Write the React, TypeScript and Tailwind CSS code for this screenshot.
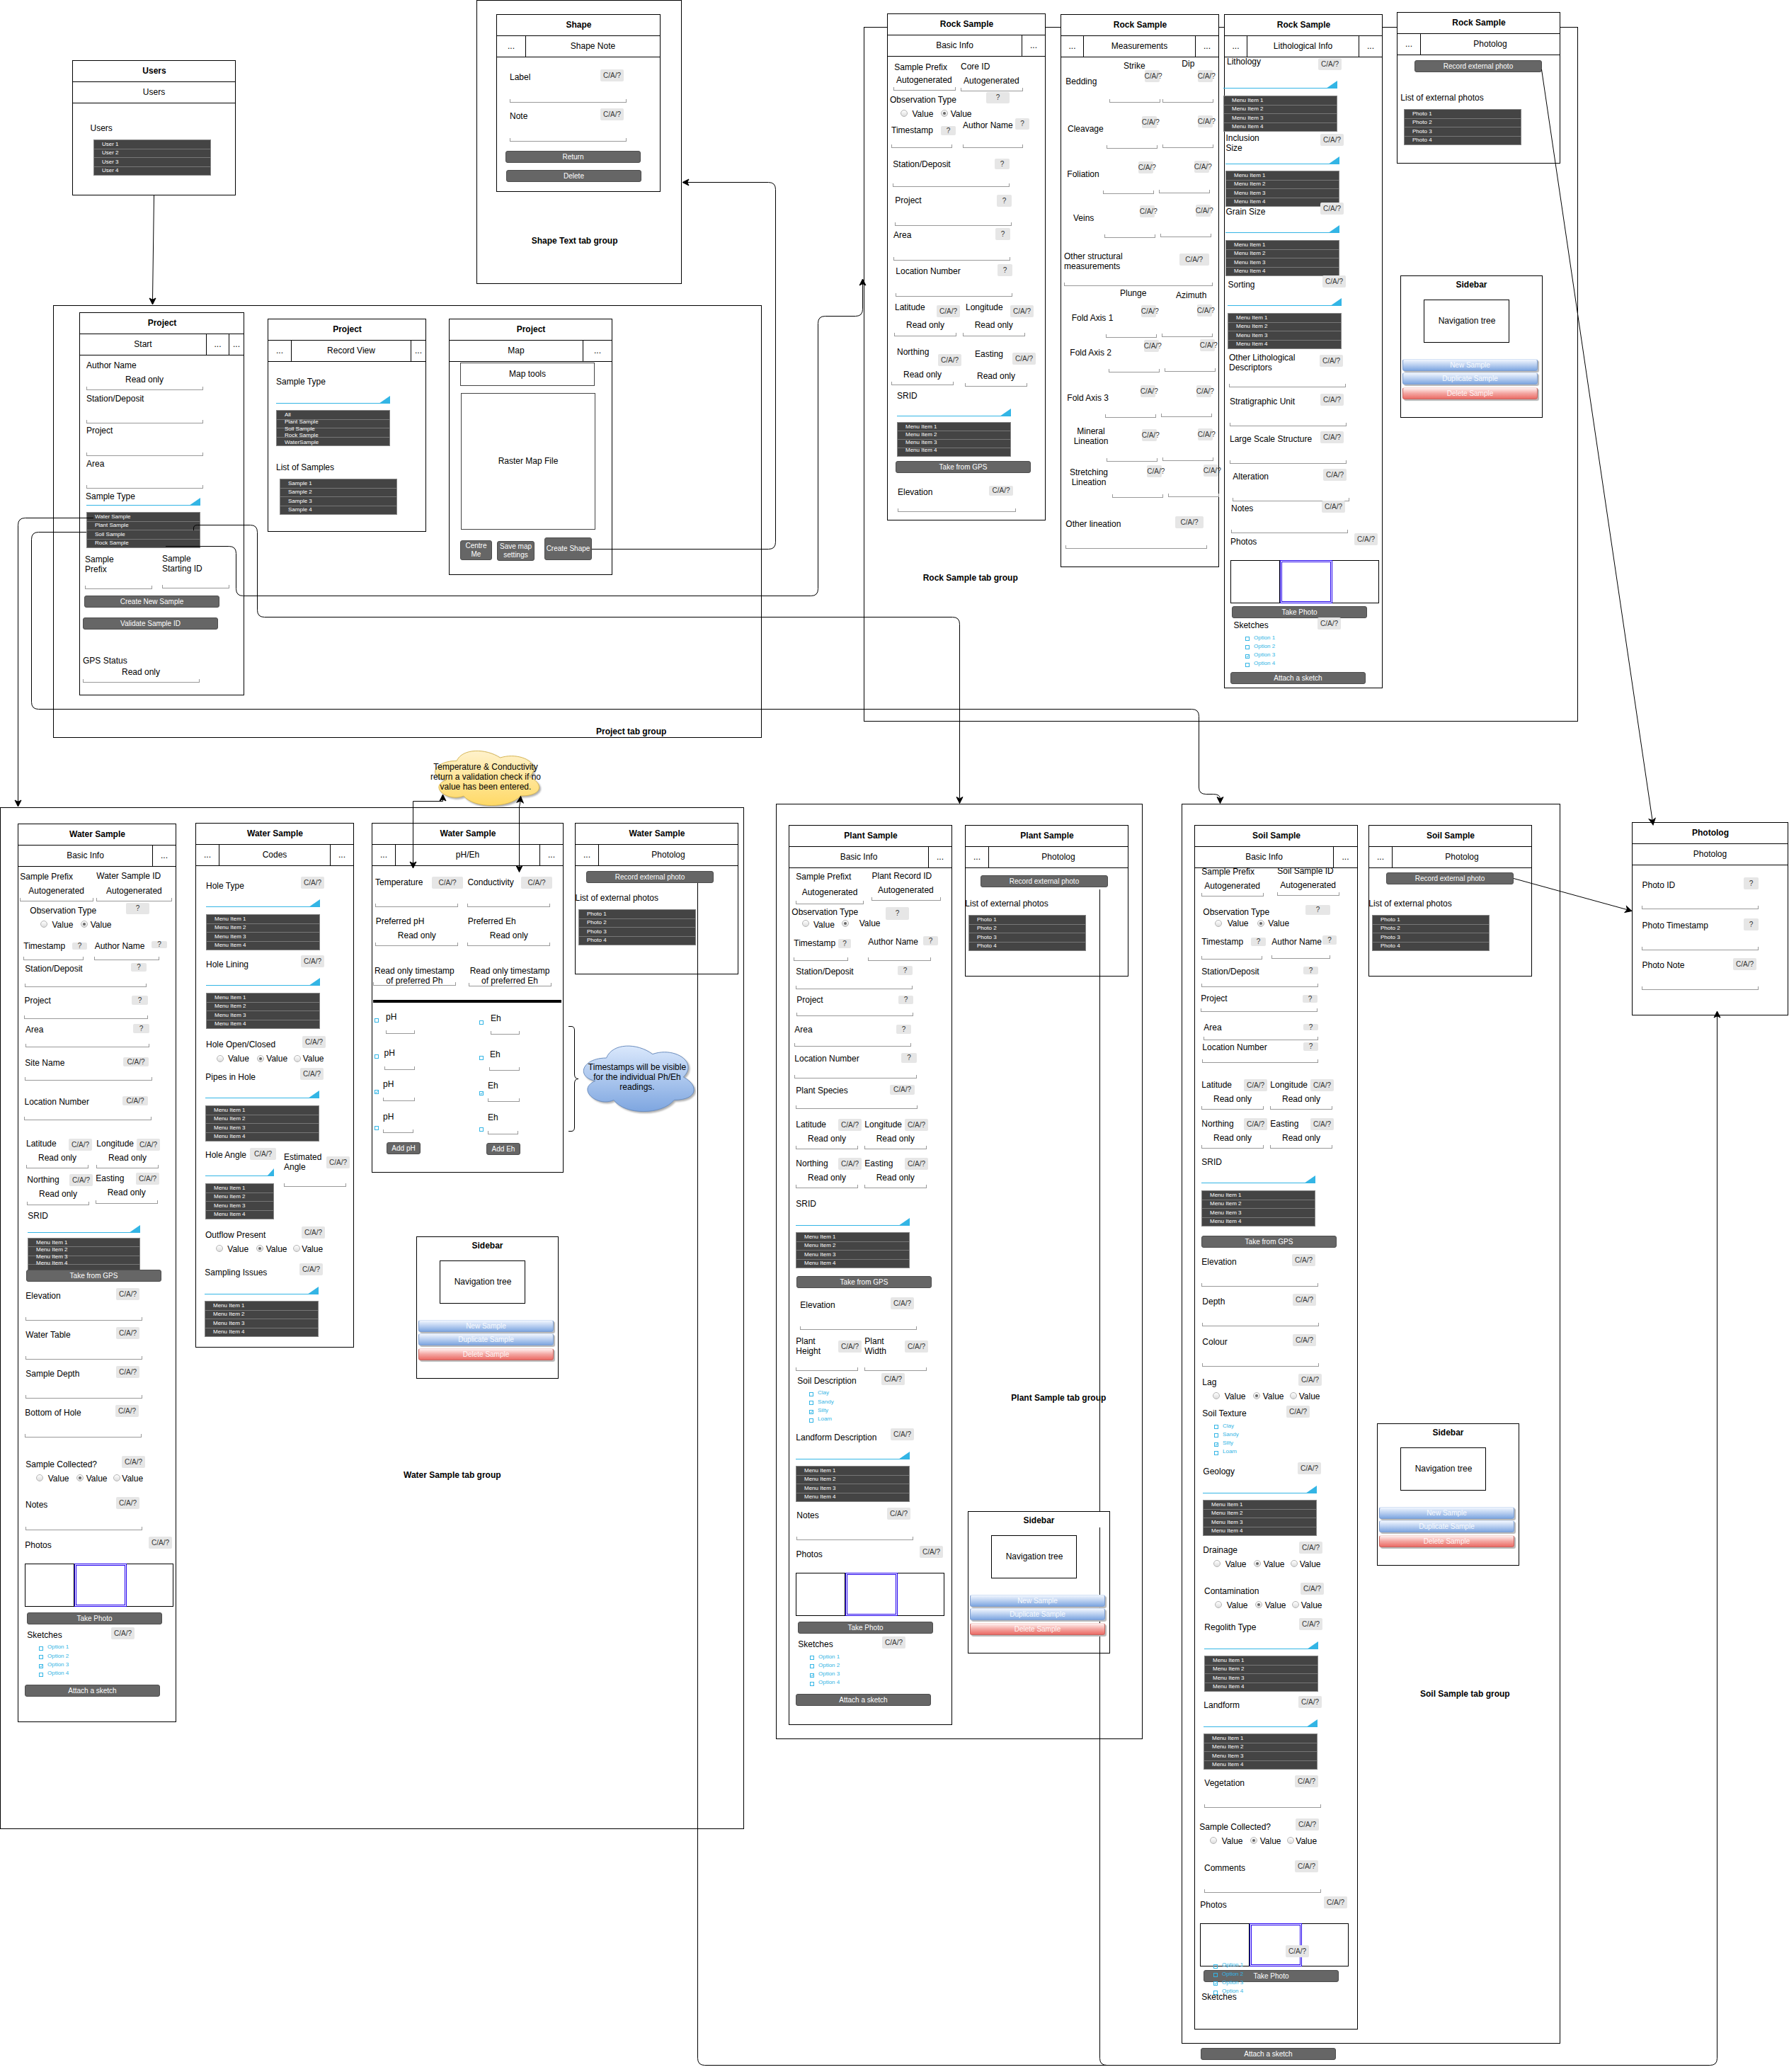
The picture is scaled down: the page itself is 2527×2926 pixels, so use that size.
import React from "react";

type Label = [x: number, y: number, text: string];
type Badge = [x: number, y: number, w?: number, h?: number, text?: string];
type Field = [x: number, bottom: number, w: number];
type Drop = [x: number, bottom: number, w?: number];
type Menu = [x: number, y: number, w: number, items: string[], h?: number, pitch?: number];
type Button = [x: number, y: number, text: string, w?: number, h?: number];
type Radio = [x: number, y: number, on?: boolean];
type Option = [x: number, y: number, text: string, on?: boolean];
type Point = [x: number, y: number];

interface Screen {
  box: [x: number, y: number, w: number, h: number];
  title: string;
  tabs: [text: string, w?: number][];
  labels?: Label[];
  centered?: Label[];
  fields?: Field[];
  drops?: Drop[];
  menus?: Menu[];
  strips?: Point[];
  buttons?: Button[];
  badges?: Badge[];
  radios?: Radio[];
  options?: Option[];
}

const MENU = ["Menu Item 1", "Menu Item 2", "Menu Item 3", "Menu Item 4"];
const PHOTOS = ["Photo 1", "Photo 2", "Photo 3", "Photo 4"];
const AUTO = "Autogenerated";
const READ = "Read only";

const optionList = (x: number, y: number, names: string[]): Option[] =>
  names.map((name, i) => [x, y + i * 12.3, name, i === 2]);

const OPTIONS = ["Option 1", "Option 2", "Option 3", "Option 4"];
const TEXTURES = ["Clay", "Sandy", "Silty", "Loam"];

const users: Screen = {
  box: [102, 85, 231, 191],
  title: "Users",
  tabs: [["Users"]],
  labels: [[127.5, 181, "Users"]],
  menus: [[132, 197, 166, ["User 1", "User 2", "User 3", "User 4"]]],
};

const shape: Screen = {
  box: [701, 20, 232, 251],
  title: "Shape",
  tabs: [["...", 41], ["Shape Note"]],
  labels: [[720, 109, "Label"], [720, 164, "Note"]],
  fields: [[720, 145, 165], [720, 200, 165]],
  badges: [[848, 98], [848, 153]],
  buttons: [[714, 213, "Return"], [715, 240, "Delete"]],
};

const projectStart: Screen = {
  box: [112, 441, 233, 541],
  title: "Project",
  tabs: [["Start", 179], ["...", 32], ["..."]],
  labels: [
    [122, 515.6, "Author Name"], [177, 535.7, READ], [122, 562.6, "Station/Deposit"], [122, 608.4, "Project"],
    [122, 655, "Area"], [121, 701, "Sample Type"], [120, 790, "Sample"], [120, 804, "Prefix"],
    [229, 788.5, "Sample"], [229, 802.5, "Starting ID"], [117, 932.7, "GPS Status"], [172, 948.7, READ],
  ],
  fields: [[122, 551, 165], [122, 598, 165], [122, 644, 165], [122, 690, 165], [120, 832, 95], [229, 831, 95], [117, 964, 165]],
  drops: [[122, 714, 161]],
  menus: [[122, 723, 161, ["Water Sample", "Plant Sample", "Soil Sample", "Rock Sample"]]],
  buttons: [[119, 841, "Create New Sample"], [117, 872, "Validate Sample ID"]],
};

const projectRecords: Screen = {
  box: [378, 450, 224, 301],
  title: "Project",
  tabs: [["...", 33], ["Record View", 169], ["..."]],
  labels: [[390, 539.3, "Sample Type"], [390, 660, "List of Samples"]],
  drops: [[390, 570, 161]],
  menus: [
    [390, 579, 161, ["All", "Plant Sample", "Soil Sample", "Rock Sample", "WaterSample"], 51, 9.8],
    [395, 676, 166, ["Sample 1", "Sample 2", "Sample 3", "Sample 4"]],
  ],
};

const projectMap: Screen = {
  box: [634, 450, 231, 362],
  title: "Project",
  tabs: [["Map", 189], ["..."]],
  buttons: [
    [650, 763, "Centre\nMe", 45, 28],
    [702, 764, "Save map\nsettings", 53, 28],
    [769, 759, "Create Shape", 67, 32],
  ],
};

const rockBasic: Screen = {
  box: [1253, 19, 224, 716],
  title: "Rock Sample",
  tabs: [["Basic Info", 190], ["..."]],
  labels: [
    [1263.3, 95, "Sample Prefix"], [1357, 94, "Core ID"], [1266, 113, AUTO], [1361, 114, AUTO],
    [1257, 141, "Observation Type"], [1288.5, 160.7, "Value"], [1342.7, 160.7, "Value"],
    [1259, 183.5, "Timestamp"], [1360, 177, "Author Name"], [1261.3, 232, "Station/Deposit"],
    [1264.3, 283.4, "Project"], [1262, 332, "Area"], [1265.3, 383, "Location Number"],
    [1264, 434, "Latitude"], [1364, 434, "Longitude"], [1280, 459, READ], [1376.7, 459, READ],
    [1267, 497, "Northing"], [1377, 500, "Easting"], [1276, 529, READ], [1380, 531.4, READ],
    [1267, 559.3, "SRID"], [1268, 695, "Elevation"],
  ],
  fields: [
    [1262, 128, 88], [1357, 129, 88], [1259, 209, 86], [1360, 209, 85], [1261, 264, 165], [1264, 319, 165],
    [1262, 368, 165], [1265, 419, 165], [1263, 475, 88], [1360, 475, 88], [1259, 544, 88], [1363, 546, 88], [1268, 723, 167],
  ],
  drops: [[1267, 588]],
  menus: [[1267, 596, 161, MENU, 49, 11.1]],
  buttons: [[1265, 651, "Take from GPS"]],
  badges: [
    [1393, 130, 33, 16, "?"], [1329, 177.5, 21, 13, "?"], [1434, 167, 20, 16, "?"], [1405, 223.5, 21, 15, "?"],
    [1408, 275, 21, 17, "?"], [1406, 322, 21, 17, "?"], [1409, 373, 21, 17, "?"], [1323, 431], [1427, 431],
    [1325, 500], [1430, 498], [1397, 686, 34, 14],
  ],
  radios: [[1277, 160], [1334, 160, true]],
};

const rockMeasurements: Screen = {
  box: [1498, 20, 224, 781],
  title: "Rock Sample",
  tabs: [["...", 32], ["Measurements", 158], ["..."]],
  labels: [
    [1587, 93, "Strike"], [1669.3, 90, "Dip"], [1505.3, 115, "Bedding"], [1508, 182, "Cleavage"],
    [1507.3, 246, "Foliation"], [1516, 308, "Veins"], [1503, 361.6, "Other structural"], [1503, 376, "measurements"],
    [1582, 414, "Plunge"], [1661, 417, "Azimuth"], [1513.7, 449, "Fold Axis 1"], [1511.3, 498, "Fold Axis 2"],
    [1507.3, 562, "Fold Axis 3"], [1505.3, 740, "Other lineation"],
  ],
  centered: [[1541, 609, "Mineral\nLineation"], [1538, 667, "Stretching\nLineation"]],
  fields: [
    [1567, 145, 72], [1642, 145, 72], [1563, 210, 72], [1642, 209, 72], [1558, 274, 72], [1637, 273, 72],
    [1560, 336, 72], [1639, 335, 72], [1503, 404, 210], [1562, 477, 72], [1641, 476, 72], [1566, 526, 72],
    [1645, 525, 72], [1561, 590, 72], [1640, 589, 72], [1563, 652, 72], [1642, 651, 72], [1571, 703, 72],
    [1650, 702, 72], [1505, 775, 200],
  ],
  badges: [
    [1616.5, 98.5, 21], [1691.7, 98.5, 21], [1612.7, 163.5, 21], [1691.7, 163, 21], [1607.7, 227.5, 21], [1686.7, 226.5, 21],
    [1609.7, 289.5, 21], [1688.7, 289, 21], [1665.7, 358, 42], [1611.7, 431, 21], [1690.7, 430, 21],
    [1615.7, 480, 21], [1694.7, 479, 21], [1610.7, 544, 21], [1689.7, 543.5, 21], [1612.7, 606, 21],
    [1691.7, 605, 21], [1620.3, 657, 21], [1699.7, 656, 21], [1660, 729, 40],
  ],
};

const rockLithology: Screen = {
  box: [1729, 20, 224, 952],
  title: "Rock Sample",
  tabs: [["...", 32], ["Lithological Info", 158], ["..."]],
  labels: [
    [1733, 87, "Lithology"], [1731.4, 194.8, "Inclusion"], [1731.4, 209, "Size"], [1731.4, 298.5, "Grain Size"],
    [1734.5, 402, "Sorting"], [1736, 505, "Other Lithological"], [1736, 519, "Descriptors"],
    [1737, 566.5, "Stratigraphic Unit"], [1737, 620, "Large Scale Structure"], [1741.3, 673, "Alteration"],
    [1739, 718, "Notes"], [1738, 765, "Photos"], [1742.4, 883, "Sketches"],
  ],
  fields: [[1736, 547, 165], [1737, 602, 165], [1737, 655, 165], [1741, 708, 165], [1739, 753, 165]],
  drops: [[1728, 125], [1731, 232], [1731, 329], [1734, 432]],
  menus: [[1728, 135, 161, MENU], [1731, 241, 161, MENU], [1731, 339, 161, MENU], [1734, 442, 161, MENU]],
  strips: [[1738, 791]],
  buttons: [[1740, 856, "Take Photo"], [1738, 949, "Attach a sketch"]],
  badges: [
    [1862, 82], [1865, 189], [1865, 286], [1868, 389], [1864, 501], [1865, 556], [1865, 609], [1869, 662],
    [1867, 707], [1913, 753], [1861, 872],
  ],
  options: optionList(1759, 900.5, OPTIONS),
};

const rockPhotolog: Screen = {
  box: [1973, 17, 231, 214],
  title: "Rock Sample",
  tabs: [["...", 33], ["Photolog"]],
  labels: [[1978.3, 138, "List of external photos"]],
  menus: [[1983, 154, 166, PHOTOS]],
  buttons: [[1998, 85, "Record external photo", 180]],
};

const waterBasic: Screen = {
  box: [25, 1163, 224, 1269],
  title: "Water Sample",
  tabs: [["Basic Info", 190], ["..."]],
  labels: [
    [28.3, 1237.5, "Sample Prefix"], [136.3, 1237, "Water Sample ID"], [40.3, 1258, AUTO], [150, 1258, AUTO],
    [42.3, 1286, "Observation Type"], [73.5, 1306, "Value"], [127.7, 1306, "Value"], [33.3, 1335.5, "Timestamp"],
    [133.7, 1335.5, "Author Name"], [35.3, 1367.6, "Station/Deposit"], [34.5, 1412.7, "Project"], [36, 1453.5, "Area"],
    [35.3, 1500.5, "Site Name"], [34.5, 1555.5, "Location Number"], [37, 1615.3, "Latitude"], [136.3, 1615.3, "Longitude"],
    [54, 1635.3, READ], [153, 1635.3, READ], [38.3, 1666, "Northing"], [135.3, 1664.3, "Easting"], [55, 1686, READ],
    [151.7, 1684, READ], [39.3, 1716.8, "SRID"], [36.3, 1830, "Elevation"], [36.3, 1885, "Water Table"],
    [36.3, 1940, "Sample Depth"], [35.3, 1995, "Bottom of Hole"], [36.3, 2068, "Sample Collected?"],
    [67.7, 2088, "Value"], [121.7, 2088, "Value"], [172.3, 2088, "Value"], [36, 2125, "Notes"], [35.3, 2182, "Photos"],
    [38.3, 2309, "Sketches"],
  ],
  fields: [
    [28, 1273, 104], [136, 1273, 107], [33, 1356, 85], [133, 1356, 92], [35, 1394, 172], [34, 1439, 175], [36, 1479, 175],
    [35, 1526, 180], [34, 1582, 180], [37, 1650, 88], [136, 1650, 88], [38, 1702, 88], [135, 1700, 88], [36, 1865, 165],
    [36, 1920, 165], [36, 1975, 165], [35, 2030, 165], [36, 2161, 165],
  ],
  drops: [[39, 1741, 159]],
  menus: [[39, 1748, 159, MENU, 50, 9.8]],
  strips: [[35, 2208]],
  buttons: [[37, 1793, "Take from GPS"], [38, 2277, "Take Photo"], [35, 2379, "Attach a sketch"]],
  badges: [
    [178, 1274.5, 33, 16, "?"], [102, 1331, 21, 10, "?"], [214, 1329, 22, 10, "?"], [185, 1360, 22, 12, "?"],
    [186, 1406, 23, 13, "?"], [188, 1446, 23, 13, "?"], [174, 1492.5, 36, 13], [173, 1547.5, 36, 13], [97, 1607.5],
    [193, 1607.5], [98, 1658], [192, 1656], [164, 1819], [164, 1874], [164, 1929], [163, 1984], [172, 2056],
    [164, 2114], [210, 2170], [157, 2298],
  ],
  radios: [[62, 1305], [119, 1305, true], [56, 2087], [113, 2087, true], [165, 2087]],
  options: optionList(55, 2326.4, OPTIONS),
};

const waterCodes: Screen = {
  box: [276, 1162, 224, 741],
  title: "Water Sample",
  tabs: [["...", 33], ["Codes", 157], ["..."]],
  labels: [
    [291, 1251, "Hole Type"], [291, 1362, "Hole Lining"], [291, 1475.2, "Hole Open/Closed"], [322, 1495, "Value"],
    [376.3, 1495, "Value"], [427.7, 1495, "Value"], [290.3, 1521.3, "Pipes in Hole"], [290, 1631, "Hole Angle"],
    [401, 1634, "Estimated"], [401, 1648.3, "Angle"], [290, 1744, "Outflow Present"], [321.3, 1763.7, "Value"],
    [375.7, 1763.7, "Value"], [426.3, 1763.7, "Value"], [289.3, 1797, "Sampling Issues"],
  ],
  fields: [[401, 1676, 88]],
  drops: [[291, 1281], [291, 1392], [290, 1551], [290, 1661, 97], [289, 1828]],
  menus: [
    [291, 1291, 161, MENU], [291, 1402, 161, MENU], [290, 1561, 161, MENU], [290, 1671, 97, MENU], [289, 1837, 161, MENU],
  ],
  badges: [[425, 1238], [425, 1349], [427, 1463], [424, 1508], [353, 1621, 37], [461, 1633], [426, 1732], [423, 1784]],
  radios: [[311, 1494.7], [368, 1494.7, true], [420, 1494.7], [310, 1763], [367, 1763, true], [419, 1763]],
};

const waterPh: Screen = {
  box: [525, 1162, 271, 494],
  title: "Water Sample",
  tabs: [["...", 33], ["pH/Eh", 204], ["..."]],
  labels: [
    [530, 1246, "Temperature"], [660.4, 1246, "Conductivity"], [530.7, 1301, "Preferred pH"], [660.7, 1301, "Preferred Eh"],
    [561.8, 1321, READ], [691.8, 1321, READ], [545, 1436, "pH"], [542.5, 1487, "pH"], [541, 1531, "pH"],
    [541, 1576.5, "pH"], [693, 1437.5, "Eh"], [692, 1488.5, "Eh"], [689, 1532.5, "Eh"], [689, 1578, "Eh"],
  ],
  centered: [[585.4, 1370.5, "Read only timestamp\nof preferred Ph"], [720, 1371, "Read only timestamp\nof preferred Eh"]],
  fields: [
    [530, 1281, 117], [660, 1281, 117], [530, 1336, 117], [660, 1336, 117], [527, 1392, 117], [662, 1393, 117],
    [545, 1460, 41], [543, 1511, 43], [541, 1555, 45], [541, 1600, 43], [693, 1461, 41], [691, 1512, 43],
    [689, 1556, 45], [689, 1602, 43],
  ],
  buttons: [[546, 1613, "Add pH", 48], [687, 1614, "Add Eh", 48]],
  badges: [[610, 1238, 44], [736, 1238, 44]],
  options: [
    [529, 1440, ""], [529, 1490.5, ""], [529, 1541, "", true], [529, 1591.5, ""],
    [677, 1442.5, ""], [677, 1493, ""], [677, 1543, "", true], [677, 1593.5, ""],
  ],
};

const waterPhotolog: Screen = {
  box: [812, 1162, 231, 214],
  title: "Water Sample",
  tabs: [["...", 33], ["Photolog"]],
  labels: [[812.5, 1268, "List of external photos"]],
  menus: [[817, 1284, 166, PHOTOS]],
  buttons: [[828, 1230, "Record external photo", 180]],
};

const plantBasic: Screen = {
  box: [1114, 1165, 231, 1271],
  title: "Plant Sample",
  tabs: [["Basic Info", 197], ["..."]],
  labels: [
    [1124.3, 1237.5, "Sample Prefixt"], [1231.5, 1237, "Plant Record ID"], [1132.7, 1260, AUTO], [1240, 1257, AUTO],
    [1118.3, 1287.5, "Observation Type"], [1149, 1305.5, "Value"], [1213.7, 1303.5, "Value"], [1121.3, 1331.7, "Timestamp"],
    [1226.3, 1330.4, "Author Name"], [1124.3, 1371.6, "Station/Deposit"], [1125.3, 1412.3, "Project"], [1122.3, 1454, "Area"],
    [1122.3, 1494.7, "Location Number"], [1124.3, 1540, "Plant Species"], [1124.3, 1588.4, "Latitude"],
    [1221.3, 1588.4, "Longitude"], [1141, 1608.3, READ], [1237.7, 1608.3, READ], [1124.3, 1643, "Northing"],
    [1221.3, 1643, "Easting"], [1141, 1663, READ], [1237.7, 1663, READ], [1124.3, 1700, "SRID"], [1130.3, 1843, "Elevation"],
    [1124.3, 1893.7, "Plant"], [1124.3, 1908, "Height"], [1221.3, 1893.7, "Plant"], [1221.3, 1908, "Width"],
    [1126.3, 1949.7, "Soil Description"], [1124.3, 2030, "Landform Description"], [1125.3, 2139.5, "Notes"],
    [1124.5, 2195, "Photos"], [1127.3, 2322, "Sketches"],
  ],
  fields: [
    [1124, 1277, 96], [1231, 1272, 98], [1121, 1357, 77], [1226, 1357, 89], [1124, 1397, 165], [1125, 1435, 165],
    [1122, 1478, 165], [1122, 1523, 173], [1124, 1566, 172], [1124, 1623, 88], [1221, 1623, 88], [1124, 1678, 88],
    [1221, 1678, 88], [1130, 1878, 165], [1124, 1936, 88], [1221, 1936, 88], [1125, 2175, 165],
  ],
  drops: [[1124, 1731], [1124, 2061]],
  menus: [[1124, 1740, 161, MENU], [1124, 2070, 161, MENU]],
  strips: [[1124, 2221]],
  buttons: [[1125, 1802, "Take from GPS"], [1127, 2290, "Take Photo"], [1124, 2392, "Attach a sketch"]],
  badges: [
    [1251, 1280.5, 33, 18, "?"], [1184, 1325.5, 18, 13, "?"], [1304, 1322, 21, 13, "?"], [1268, 1364, 21, 13, "?"],
    [1269, 1406, 21, 12, "?"], [1266, 1446.5, 21, 13, "?"], [1273, 1486.5, 22, 14, "?"], [1257, 1531.5, 35, 14],
    [1184, 1580], [1278, 1580], [1184, 1635], [1278, 1635], [1258, 1832], [1184, 1893], [1278, 1893], [1245, 1939],
    [1258, 2017], [1253, 2129], [1299, 2183], [1246, 2311],
  ],
  radios: [[1138, 1303.5], [1194, 1303.5, true]],
  options: [...optionList(1143, 1967.4, TEXTURES), ...optionList(1144, 2339.5, OPTIONS)],
};

const plantPhotolog: Screen = {
  box: [1363, 1165, 231, 214],
  title: "Plant Sample",
  tabs: [["...", 33], ["Photolog"]],
  labels: [[1363.3, 1276, "List of external photos"]],
  menus: [[1368, 1292, 166, PHOTOS]],
  buttons: [[1385, 1236, "Record external photo", 180]],
};

const soilBasic: Screen = {
  box: [1687, 1165, 231, 1701],
  title: "Soil Sample",
  tabs: [["Basic Info", 196], ["..."]],
  labels: [
    [1697.3, 1231, "Sample Prefix"], [1804.3, 1230, "Soil Sample ID"], [1701.3, 1251, AUTO], [1808.3, 1250, AUTO],
    [1699.3, 1288, "Observation Type"], [1733.7, 1304.3, "Value"], [1791.3, 1304.3, "Value"], [1697.3, 1329.5, "Timestamp"],
    [1796.3, 1329.5, "Author Name"], [1697.3, 1371.6, "Station/Deposit"], [1696.3, 1410, "Project"], [1700.3, 1450.7, "Area"],
    [1698.3, 1479, "Location Number"], [1697.3, 1532, "Latitude"], [1794.3, 1532, "Longitude"], [1714, 1552, READ],
    [1811, 1552, READ], [1697.3, 1587, "Northing"], [1794.3, 1587, "Easting"], [1714, 1607, READ], [1811, 1607, READ],
    [1697.3, 1641, "SRID"], [1697.3, 1782, "Elevation"], [1698.3, 1838, "Depth"], [1698.3, 1895, "Colour"],
    [1698.3, 1952.3, "Lag"], [1729.7, 1972, "Value"], [1783.7, 1972, "Value"], [1834.7, 1972, "Value"],
    [1698.3, 1996, "Soil Texture"], [1699.3, 2078, "Geology"], [1699.3, 2189, "Drainage"], [1730.7, 2209, "Value"],
    [1784.7, 2209, "Value"], [1835.7, 2209, "Value"], [1701, 2247, "Contamination"], [1732.7, 2267, "Value"],
    [1786.7, 2267, "Value"], [1837.7, 2267, "Value"], [1701.3, 2298, "Regolith Type"], [1700.3, 2408, "Landform"],
    [1701.3, 2518, "Vegetation"], [1694.3, 2580, "Sample Collected?"], [1725.7, 2600, "Value"], [1779.7, 2600, "Value"],
    [1830.3, 2600, "Value"], [1701, 2638, "Comments"], [1695.3, 2690, "Photos"], [1697.3, 2820, "Sketches"],
  ],
  fields: [
    [1697, 1266, 88], [1804, 1265, 88], [1697, 1355, 86], [1796, 1354, 83], [1697, 1394, 165], [1696, 1429, 165],
    [1700, 1469, 162], [1698, 1501, 164], [1697, 1567, 88], [1794, 1567, 88], [1697, 1622, 88], [1794, 1622, 88],
    [1697, 1817, 165], [1698, 1873, 165], [1698, 1930, 165], [1701, 2553, 165], [1701, 2673, 165],
  ],
  drops: [[1697, 1671], [1699, 2109], [1701, 2329], [1700, 2439]],
  menus: [[1697, 1681, 161, MENU], [1699, 2118, 161, MENU], [1701, 2338, 161, MENU], [1700, 2448, 161, MENU]],
  strips: [[1695, 2716]],
  buttons: [[1697, 1745, "Take from GPS"], [1700, 2782, "Take Photo"], [1696, 2892, "Attach a sketch"]],
  badges: [
    [1844, 1278, 35, 14, "?"], [1767, 1324, 21, 12, "?"], [1868, 1321, 20, 13, "?"], [1841, 1365, 21, 11, "?"],
    [1840, 1404.5, 21, 11, "?"], [1841, 1445.5, 21, 9, "?"], [1841, 1472, 21, 12, "?"], [1757, 1524], [1851, 1524],
    [1757, 1579], [1851, 1579], [1825, 1771], [1826, 1827], [1826, 1884], [1834, 1940], [1817, 1985], [1833, 2065],
    [1835, 2177], [1837, 2235], [1835, 2285], [1834, 2395], [1829, 2507], [1830, 2568], [1829, 2627], [1870, 2678],
    [1816, 2747],
  ],
  radios: [
    [1720.5, 1303.5], [1781, 1303.5, true], [1718, 1971.3], [1775, 1971.3, true], [1827, 1971.3],
    [1719, 2208], [1776, 2208, true], [1828, 2208], [1721, 2266], [1778, 2266, true], [1830, 2266],
    [1714, 2599.4], [1771, 2599.4, true], [1823, 2599.4],
  ],
  options: [...optionList(1715, 2013.5, TEXTURES), ...optionList(1714, 2775.3, OPTIONS)],
};

const soilPhotolog: Screen = {
  box: [1933, 1165, 231, 214],
  title: "Soil Sample",
  tabs: [["...", 33], ["Photolog"]],
  labels: [[1933.3, 1276, "List of external photos"]],
  menus: [[1938, 1292, 166, PHOTOS]],
  buttons: [[1958, 1232, "Record external photo", 180]],
};

const photolog: Screen = {
  box: [2305, 1161, 221, 273],
  title: "Photolog",
  tabs: [["Photolog"]],
  labels: [[2319.5, 1249.5, "Photo ID"], [2319.5, 1307, "Photo Timestamp"], [2319.5, 1363, "Photo Note"]],
  fields: [[2319, 1284, 165], [2319, 1342, 165], [2319, 1398, 165]],
  badges: [[2463, 1239, 21, 17, "?"], [2463, 1297, 21, 17, "?"], [2448, 1353]],
};

const SCREENS: Screen[] = [
  users, shape, projectStart, projectRecords, projectMap, rockBasic, rockMeasurements, rockLithology, rockPhotolog,
  waterBasic, waterCodes, waterPh, waterPhotolog, plantBasic, plantPhotolog, soilBasic, soilPhotolog, photolog,
];

const GROUPS: [number, number, number, number][] = [
  [673, 0, 290, 401],
  [75, 431, 1001, 611],
  [1220, 38, 1009, 981],
  [0, 1140, 1051, 1443],
  [1096, 1135, 518, 1321],
  [1669, 1135, 535, 1751],
];

const GROUP_NAMES: Label[] = [
  [750.7, 340, "Shape Text tab group"],
  [842, 1033, "Project tab group"],
  [1303.7, 816, "Rock Sample tab group"],
  [570, 2083, "Water Sample tab group"],
  [1428.3, 1974, "Plant Sample tab group"],
  [2006, 2392, "Soil Sample tab group"],
];

const SIDEBARS: Point[] = [[1978, 389], [588, 1746], [1367, 2134], [1945, 2010]];

function Header({ screen }: { screen: Screen }) {
  const [x, y, w, h] = screen.box;
  return (
    <section className="absolute flex flex-col border border-black" style={{ left: x, top: y, width: w, height: h }}>
      <h2 className="h-[30px] shrink-0 border-b border-black bg-white pl-px text-center text-xs leading-[29px] font-bold">{screen.title}</h2>
      <nav className="flex h-[30px] shrink-0 border-b border-black bg-white text-center text-xs leading-[28px]">
        {screen.tabs.map(([text, width], i) => (
          <span
            key={i}
            className={width ? "shrink-0 border-r border-black" : "flex-1"}
            style={width ? { width } : undefined}
          >
            {text}
          </span>
        ))}
      </nav>
    </section>
  );
}

/** Dark list with four ruled bands; the item text has its own pitch and is stacked over the bands. */
function MenuList({ menu: [x, y, w, items, h = 51, pitch = 12.3] }: { menu: Menu }) {
  return (
    <div className="absolute grid border border-[#858585] bg-[#444444]" style={{ left: x, top: y, width: w, height: h }}>
      <div className="flex min-h-0 flex-col divide-y divide-[#777777] [grid-area:1/1]">
        <div className="flex-1" />
        <div className="flex-1" />
        <div className="flex-1" />
        <div className="flex-1" />
      </div>
      <ul className="min-h-0 pl-[11px] text-[8px] whitespace-nowrap text-white [grid-area:1/1]">
        {items.map((item) => (
          <li key={item} style={{ height: pitch, lineHeight: "11px" }}>
            {item}
          </li>
        ))}
      </ul>
    </div>
  );
}

function PhotoStrip({ at: [x, y] }: { at: Point }) {
  return (
    <div className="absolute flex h-[61px] w-[210px] border border-black" style={{ left: x, top: y }}>
      <div className="w-[69px] border-r border-black" />
      <div className="-my-px w-[74px] border-[3px] border-double border-[#2200ee]" />
    </div>
  );
}

function ScreenContent({ s }: { s: Screen }) {
  return (
    <>
      {s.fields?.map(([x, bottom, w], i) => (
        <div key={i} className="absolute h-[5px] border border-t-0 border-[#999999]" style={{ left: x, top: bottom - 5, width: w }} />
      ))}
      {s.drops?.map(([x, bottom, w = 161], i) => (
        <div key={i} className="absolute flex h-[11px] justify-end border-b border-[#33b5e5]" style={{ left: x, top: bottom - 11, width: w }}>
          <svg className="h-[11px] shrink-0" width={w < 120 ? 10 : 16} viewBox="0 0 16 11" preserveAspectRatio="none">
            <path d="M0 11L16 0V11Z" fill="#33b5e5" />
          </svg>
        </div>
      ))}
      {s.menus?.map((menu, i) => <MenuList key={i} menu={menu} />)}
      {s.strips?.map((at, i) => <PhotoStrip key={i} at={at} />)}
      {s.buttons?.map(([x, y, text, w = 191, h = 17], i) => (
        <button
          key={i}
          className="absolute flex items-center justify-center rounded-[3px] border border-[#4d4d4d] bg-[#666666] text-[10px] leading-[12px] whitespace-pre text-white"
          style={{ left: x, top: y, width: w, height: h }}
        >
          {text}
        </button>
      ))}
      {s.badges?.map(([x, y, w = 33, h = 17, text = "C/A/?"], i) => (
        <div
          key={i}
          className="absolute rounded-[2px] bg-[#e6e6e6] text-center text-[10px] whitespace-nowrap text-[#333333]"
          style={{ left: x, top: y, width: w, height: h, lineHeight: `${h}px` }}
        >
          {text}
        </div>
      ))}
      {s.labels?.map(([x, y, text], i) => (
        <span key={i} className="absolute text-xs leading-[14px] whitespace-nowrap" style={{ left: x, top: y - 7 }}>
          {text}
        </span>
      ))}
      {s.centered?.map(([x, y, text], i) => (
        <span key={i} className="absolute -translate-x-1/2 text-center text-xs leading-[14px] whitespace-pre" style={{ left: x, top: y - 7 }}>
          {text}
        </span>
      ))}
      {s.radios?.map(([x, y, on], i) => (
        <span
          key={i}
          className="absolute flex size-[10px] items-center justify-center rounded-full border border-[#b4b4b4] bg-linear-to-b from-white to-[#dddddd]"
          style={{ left: x - 5, top: y - 5 }}
        >
          {on && <span className="size-1 rounded-full bg-[#666666]" />}
        </span>
      ))}
      {s.options?.map(([x, y, text, on], i) => (
        <div key={i} className="absolute flex items-center gap-[6px] text-[8px] leading-[10px] text-[#33b5e5]" style={{ left: x, top: y - 5 }}>
          <svg className="mt-[3px]" width="6" height="6" viewBox="0 0 6 6" fill="none" stroke="#33b5e5">
            <rect x="0.5" y="0.5" width="5" height="5" />
            {on && <path d="M1.5 3L2.7 4.2L4.8 1.6" />}
          </svg>
          {text && <span>{text}</span>}
        </div>
      ))}
    </>
  );
}

const GLASS =
  "flex h-[17px] w-[191px] items-center justify-center rounded-[3px] border text-[10px] leading-none text-white/90 shadow-[2px_2px_1px_#b8b8b8]";
const BLUE = "border-[#7f9fd0] border-t-[#d5e2f5] bg-linear-to-b from-[#f1f6fe] via-[#b9cff0] to-[#7ea6e0]";
const RED = "border-[#c96560] border-t-[#f6d6d4] bg-linear-to-b from-[#fdf0ef] via-[#f3a5a1] to-[#ea6b66]";

function Sidebar({ at: [x, y] }: { at: Point }) {
  return (
    <aside className="absolute flex h-[201px] w-[201px] flex-col border border-black" style={{ left: x, top: y }}>
      <h2 className="h-[22px] shrink-0 bg-white text-center text-xs leading-[25px] font-bold">Sidebar</h2>
      <div className="mt-[11px] ml-8 h-[61px] w-[121px] shrink-0 border border-black bg-white pl-px text-center text-xs leading-[59px]">
        Navigation tree
      </div>
      <div className="mt-[23px] ml-[2px] flex flex-col">
        <div className={`${GLASS} ${BLUE}`}>New Sample</div>
        <div className={`${GLASS} ${BLUE} mt-[2px]`}>Duplicate Sample</div>
        <div className={`${GLASS} ${RED} mt-[4px]`}>Delete Sample</div>
      </div>
    </aside>
  );
}

/** Notched arrow head with its tip at (x, y), turned by `turn` degrees from pointing right. */
function Arrow({ x, y, turn }: { x: number; y: number; turn: number }) {
  return <path d="M0 0L-9 -4.5L-6.7 0L-9 4.5Z" fill="black" transform={`translate(${x} ${y}) rotate(${turn})`} />;
}

function Connectors() {
  return (
    <svg className="absolute inset-0" width="2527" height="2926" fill="none" stroke="black">
      <path d="M217.5 276L215.5 424" />
      <Arrow x={215.5} y={430} turn={90} />
      <path d="M836 775.5H1085.5Q1095.5 775.5 1095.5 765.5V267.5Q1095.5 257.5 1085.5 257.5H970" />
      <Arrow x={964} y={257.5} turn={180} />
      <path d="M132 731.5H35.5Q25.5 731.5 25.5 741.5V1132" />
      <Arrow x={25.5} y={1139} turn={90} />
      <path d="M122 751.5H54.5Q44.5 751.5 44.5 761.5V991.5Q44.5 1001.5 54.5 1001.5H1683.5Q1693.5 1001.5 1693.5 1011.5V1112Q1693.5 1121.5 1703.5 1121.5H1713.5Q1723.5 1121.5 1723.5 1128" />
      <Arrow x={1723.5} y={1134.5} turn={90} />
      <path d="M273.5 749V746Q273.5 741.5 278.5 741.5H353.5Q363.5 741.5 363.5 751.5V861.5Q363.5 871.5 373.5 871.5H1345.5Q1355.5 871.5 1355.5 881.5V1127" />
      <Arrow x={1355.5} y={1134.5} turn={90} />
      <path d="M234 771.5H323.5Q333.5 771.5 333.5 781.5V831.5Q333.5 841.5 343.5 841.5H1145.5Q1155.5 841.5 1155.5 831.5V456.5Q1155.5 446.5 1165.5 446.5H1208.5Q1218.5 446.5 1218.5 436.5V400" />
      <Arrow x={1218.5} y={394} turn={-90} />
      <path d="M2177.5 98L2334 1158" />
      <Arrow x={2335} y={1165} turn={81.6} />
      <path d="M2138 1240.5L2298 1284.5" />
      <Arrow x={2305} y={1286.5} turn={15.5} />
      <path d="M985.5 1247V2906.5Q985.5 2916.5 995.5 2916.5H2415.5Q2425.5 2916.5 2425.5 2906.5V1434" />
      <path d="M1553.5 1256V2906.5Q1553.5 2916.5 1563.5 2916.5" />
      <Arrow x={2425.5} y={1428} turn={-90} />
      <path d="M583.5 1219V1131.5H625.5V1128" />
      <Arrow x={583.5} y={1226} turn={90} />
      <Arrow x={625.5} y={1122} turn={-90} />
      <path d="M733.5 1225V1140L735 1131" />
      <Arrow x={733.5} y={1231.5} turn={90} />
      <Arrow x={735.5} y={1124.5} turn={-85} />
      <path d="M803 1449.5H807Q811.5 1449.5 811.5 1455V1517Q811.5 1523.5 817 1523.5Q811.5 1523.5 811.5 1530V1592Q811.5 1597.5 807 1597.5H803" />
    </svg>
  );
}

function Cloud({ x, y, w, h, tint, text }: { x: number; y: number; w: number; h: number; tint: "yellow" | "blue"; text: string }) {
  const [from, to, edge] = tint === "yellow" ? ["#fff2cc", "#ffd966", "#d6b656"] : ["#dae8fc", "#7ea6e0", "#6c8ebf"];
  return (
    <div className="absolute flex items-center justify-center" style={{ left: x, top: y, width: w, height: h }}>
      <svg className="absolute inset-0 drop-shadow-[2px_2px_1px_#b0b0b0]" width={w} height={h} viewBox="0 0 100 100" preserveAspectRatio="none">
        <linearGradient id={tint} x1="0" y1="0" x2="0" y2="1">
          <stop offset="0" stopColor={from} />
          <stop offset="1" stopColor={to} />
        </linearGradient>
        <path
          d="M25 25C5 25 0 50 16 55C0 66 18 90 31 80C40 100 70 100 80 80C100 80 100 60 87.5 50C100 30 80 10 62.5 20C50 5 30 5 25 25Z"
          fill={`url(#${tint})`}
          stroke={edge}
          vectorEffect="non-scaling-stroke"
        />
      </svg>
      <p className="relative text-center text-xs leading-[14px] whitespace-pre">{text}</p>
    </div>
  );
}

export default function App() {
  return (
    <main className="relative h-[2926px] w-[2527px] overflow-hidden bg-white font-['Liberation_Sans',Arial,sans-serif] text-black">
      {GROUPS.map(([x, y, w, h], i) => (
        <div key={i} className="absolute border border-black" style={{ left: x, top: y, width: w, height: h }} />
      ))}
      {GROUP_NAMES.map(([x, y, text]) => (
        <h1 key={text} className="absolute text-xs leading-[14px] font-bold whitespace-nowrap" style={{ left: x, top: y - 7 }}>
          {text}
        </h1>
      ))}
      {SCREENS.map((screen, i) => (
        <React.Fragment key={i}>
          <Header screen={screen} />
          <ScreenContent s={screen} />
        </React.Fragment>
      ))}
      <div className="absolute top-[512px] left-[650px] h-[33px] w-[190px] border border-[#444444] text-center text-xs leading-[31px]">Map tools</div>
      <div className="absolute top-[555px] left-[651px] h-[193px] w-[190px] border border-[#444444] text-center text-xs leading-[191px]">
        Raster Map File
      </div>
      <div className="absolute top-[1412px] left-[527px] h-1 w-[266px] bg-black" />
      <Cloud x={604} y={1052} w={164} h={90} tint="yellow" text={"Temperature & Conductivity\nreturn a validation check if no\nvalue has been entered."} />
      <Cloud x={813} y={1467} w={174} h={108} tint="blue" text={"Timestamps will be visible\nfor the individual Ph/Eh\nreadings."} />
      <Connectors />
      {SIDEBARS.map((at, i) => (
        <Sidebar key={i} at={at} />
      ))}
    </main>
  );
}
